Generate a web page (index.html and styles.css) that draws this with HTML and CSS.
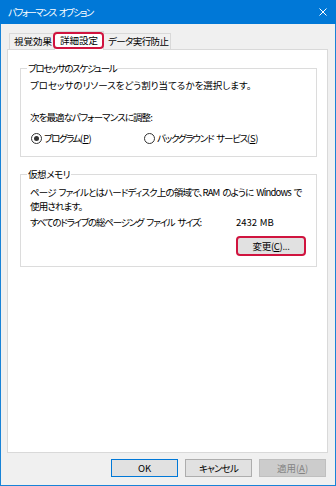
FILE: index.html
```html
<!DOCTYPE html>
<html lang="ja">
<head>
<meta charset="utf-8">
<link rel="stylesheet" href="styles.css">
</head>
<body>
<div class="window">
  <div class="titlebar">
    <span class="title">パフォーマンス オプション</span>
    <svg class="close" width="8" height="8" viewBox="0 0 8 8"><path d="M0.5 0.5L7.5 7.5M7.5 0.5L0.5 7.5" stroke="#fff" stroke-width="1" fill="none"/></svg>
  </div>
  <div class="body">
    <div class="tabs">
      <div class="tab t1">視覚効果</div>
      <div class="tab sel">詳細設定</div>
      <div class="tab t3">データ実行防止</div>
    </div>
    <div class="panel">
      <fieldset class="group g1">
        <legend class="lg1">プロセッサのスケジュール</legend>
        <p class="l1">プロセッサのリソースをどう割り当てるかを選択します。</p>
        <p class="l2">次を最適なパフォーマンスに調整:</p>
        <div class="radios">
          <label class="radio r1"><span class="dot on"></span><span class="rt1">プログラム<span class="acc">(<u>P</u>)</span></span></label>
          <label class="radio r2"><span class="dot"></span><span class="rt2">バックグラウンド サービス<span class="acc">(<u>S</u>)</span></span></label>
        </div>
      </fieldset>
      <fieldset class="group g2">
        <legend class="lg2">仮想メモリ</legend>
        <p class="desc">ページ ファイルとはハードディスク上の領域で、RAM のように Windows で<br>使用されます。</p>
        <div class="sizerow"><span class="sizelabel">すべてのドライブの総ページング ファイル サイズ:</span><span class="sizeval">2432 MB</span></div>
        <div class="btnrow"><button class="btn change">変更(<u>C</u>)...</button></div>
      </fieldset>
    </div>
    <div class="footer">
      <button class="btn ok">OK</button>
      <button class="btn cancel">キャンセル</button>
      <button class="btn disabled">適用(<u>A</u>)</button>
    </div>
  </div>
</div>
</body>
</html>
```
FILE: styles.css
```css
html, body {
  margin: 0;
  padding: 0;
}
body {
  width: 336px;
  height: 486px;
  overflow: hidden;
  font-family: "Noto Sans CJK JP", "Noto Sans", sans-serif;
  font-size: 9.5px;
  font-feature-settings: "palt";
  color: #000;
}
.window {
  width: 336px;
  height: 486px;
  display: flex;
  flex-direction: column;
}
.titlebar {
  height: 24px;
  flex: none;
  background: #0078d7;
  color: #fff;
  display: flex;
  align-items: center;
  justify-content: space-between;
  padding: 0 9px 0 8px;
  box-sizing: border-box;
}
.title {
  font-size: 9.5px;
  line-height: 12px;
  letter-spacing: -1.6px;
  word-spacing: 2.5px;
}
.close {
  display: block;
}
.body {
  flex: 1;
  display: flex;
  flex-direction: column;
  background: #f0f0f0;
  border: 1px solid #1883d7;
  border-top: 0;
  padding: 7px 9px 0 6px;
  min-height: 0;
}
.tabs {
  height: 18px;
  display: flex;
  align-items: flex-end;
  padding-left: 2px;
  flex: none;
}
.tab {
  box-sizing: border-box;
  height: 16px;
  border: 1px solid #d9d9d9;
  border-bottom: 0;
  background: #f0f0f0;
  line-height: 14px;
  padding-left: 4px;
  white-space: nowrap;
}
.t1 { width: 46px; }
.t3 { width: 67px; border-left: 0; letter-spacing: -0.6px; }
.tab.sel {
  width: 49px;
  height: 19px;
  margin-bottom: -1px;
  background: #fff;
  border-left: 0;
  position: relative;
  z-index: 1;
  line-height: 17px;
  padding-left: 5px;
}
.tab.sel::after {
  content: "";
  position: absolute;
  left: -2px;
  top: 0;
  right: -1px;
  bottom: 1px;
  border: 2px solid #d0143f;
  border-radius: 4px;
}
.panel {
  flex: 1;
  background: #fff;
  border: 1px solid #d9d9d9;
  margin-right: -2px;
  padding: 12px 10px 0 12px;
  display: flex;
  flex-direction: column;
}
.group {
  margin: 0;
  border: 1px solid #dcdcdc;
  padding: 0 10px 12px 9px;
  min-width: 0;
}
.group legend {
  padding: 0 1px;
  margin-left: -3px;
  line-height: 12px;
}
.lg1 { letter-spacing: -1.4px; }
.lg2 { letter-spacing: -0.4px; }
p {
  margin: 0;
  line-height: 12px;
}
.l1 { margin-top: 5px; }
.l2 { margin-top: 20px; letter-spacing: -0.9px; }
.radios {
  margin-top: 9px;
  display: flex;
  height: 12px;
  line-height: 12px;
}
.radio {
  display: flex;
  align-items: center;
  white-space: nowrap;
}
.rt1 { letter-spacing: -1.5px; }
.rt2 { letter-spacing: -1.2px; word-spacing: 2px; }
.acc { letter-spacing: -0.3px; }
.r1 { width: 113px; margin-left: 1px; }
.dot {
  box-sizing: border-box;
  width: 11px;
  height: 11px;
  border: 1px solid #333;
  border-radius: 50%;
  margin-right: 2px;
  display: flex;
  align-items: center;
  justify-content: center;
}
.dot.on::before {
  content: "";
  width: 5px;
  height: 5px;
  border-radius: 50%;
  background: #333;
}
.g2 {
  margin-top: 11px;
  padding-right: 11px;
  padding-bottom: 11px;
}
.desc {
  margin-top: 5px;
  line-height: 14px;
  letter-spacing: -0.85px;
  word-spacing: 1.6px;
  white-space: nowrap;
}
.sizerow {
  margin-top: 3px;
  display: flex;
  line-height: 12px;
}
.sizelabel { width: 206px; letter-spacing: -1.2px; word-spacing: 2px; }
.sizeval { word-spacing: 0.5px; }
.btnrow {
  margin-top: 9px;
  display: flex;
  justify-content: flex-end;
}
.btn {
  font-family: inherit;
  font-size: 9.5px;
  font-feature-settings: "palt";
  box-sizing: border-box;
  width: 67px;
  height: 18px;
  padding: 0;
  margin: 0;
  background: #e1e1e1;
  border: 1px solid #adadad;
  color: #000;
  line-height: 16px;
}
.btn u { text-decoration: underline; }
.cancel { letter-spacing: -0.8px; }
.change {
  position: relative;
  width: 68px;
  letter-spacing: -0.3px;
}
.change::after {
  content: "";
  position: absolute;
  left: -2px;
  top: -2px;
  right: -2px;
  bottom: -2px;
  border: 2px solid #d0143f;
  border-radius: 4px;
}
.footer {
  flex: none;
  height: 18px;
  margin: 6px 0 8px;
  display: flex;
  justify-content: flex-end;
  gap: 7px;
}
.ok {
  border-color: #0078d7;
}
.disabled {
  background: #cccccc;
  border-color: #bfbfbf;
  color: #838383;
}
```
